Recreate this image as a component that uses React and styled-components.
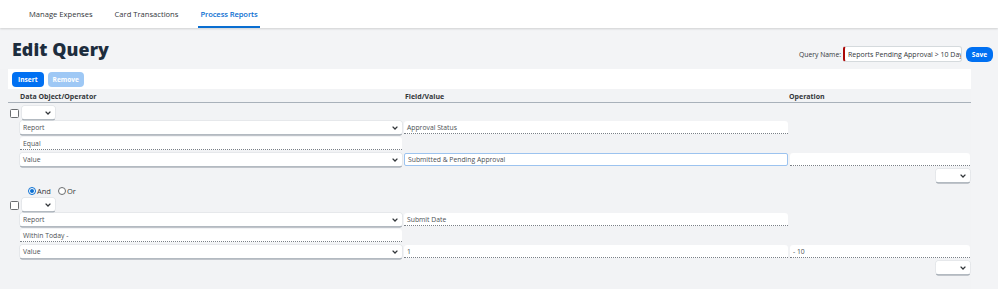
import React from 'react';
import styled, { createGlobalStyle } from 'styled-components';

const GlobalStyle = createGlobalStyle`
  html, body {
    margin: 0;
    padding: 0;
    background: #f5f6f7;
    font-family: "Open Sans", "Noto Sans", Arial, sans-serif;
    color: #32363a;
  }
`;

const Page = styled.div`
  width: 998px;
  height: 289px;
  overflow: hidden;
  background: #f3f4f6;
`;

const Nav = styled.nav`
  height: 28px;
  background: #ffffff;
  box-shadow: 0 1px 2px rgba(0, 0, 0, 0.15);
  display: flex;
  align-items: stretch;
  padding-left: 27px;
  gap: 18px;
  position: relative;
  z-index: 1;
`;

const Tab = styled.div`
  display: flex;
  align-items: center;
  padding: 1px 2px 0;
  font-size: 7.6px;
  font-weight: ${p => (p.$active ? 600 : 400)};
  letter-spacing: ${p => (p.$active ? '-0.1px' : '0')};
  color: ${p => (p.$active ? '#0a6ed1' : '#32363a')};
  border-bottom: 2px solid ${p => (p.$active ? '#0a6ed1' : 'transparent')};
`;

const TitleBar = styled.div`
  display: flex;
  justify-content: space-between;
  align-items: flex-start;
  height: 41px;
  padding: 0 5px 0 12px;
`;

const Title = styled.h1`
  margin: 9px 0 0;
  font-size: 17.8px;
  font-weight: 800;
  color: #1d2d3e;
  letter-spacing: 0.1px;
`;

const QueryName = styled.div`
  display: flex;
  align-items: center;
  gap: 2px;
  margin-top: 18px;
  font-size: 6.8px;
  color: #32363a;
`;

const NameInput = styled.div`
  width: 113px;
  height: 14px;
  background: #fff;
  border: 1px solid #d5dadd;
  border-left: 2px solid #aa0808;
  border-radius: 3px;
  display: flex;
  align-items: center;
  padding-left: 3px;
  overflow: hidden;
  white-space: nowrap;
  font-size: 7px;
`;

const Button = styled.div`
  height: 15px;
  padding: 0 ${p => p.$pad || 6}px;
  display: inline-flex;
  align-items: center;
  justify-content: center;
  border-radius: 4px;
  background: ${p => (p.$disabled ? '#9ec8f5' : '#0070f2')};
  color: #fff;
  font-size: 6.6px;
  font-weight: 700;
`;

const SaveButton = styled(Button)`
  margin-left: 2px;
  width: 27px;
  padding: 0;
  border-radius: 6px;
`;

const PanelBg = styled.div`
  width: 971px;
  background: #f2f3f5;
  height: 220px;
`;

const Panel = styled.div`
  width: 963px;
  margin-left: 8px;
`;

const Toolbar = styled.div`
  height: 20px;
  background: #fff;
  display: flex;
  align-items: center;
  gap: 4px;
  padding-left: 4px;
`;

const HeaderRow = styled.div`
  display: grid;
  grid-template-columns: 385px 384px 1fr;
  height: 13px;
  padding-left: 12px;
  padding-bottom: 1px;
  box-sizing: border-box;
  margin-top: 1px;
  border-bottom: 1.5px solid #a9b1ba;
  align-items: end;
  font-size: 7px;
  font-weight: 700;
  color: #32363a;
`;

const Block = styled.div`
  display: flex;
  flex-direction: column;
  gap: 3px;
  padding-top: 3px;
`;

const TopLine = styled.div`
  display: flex;
  align-items: center;
  gap: 3px;
  margin-left: 2px;
  margin-bottom: -1px;
`;

const Checkbox = styled.div`
  width: 7px;
  height: 7px;
  border: 1px solid #6a6d70;
  border-radius: 1.5px;
  background: #fff;
  margin-top: 2px;
`;

const Grid = styled.div`
  display: grid;
  grid-template-columns: 382px 384px 180px;
  column-gap: 2px;
  row-gap: 3px;
  margin-left: 12px;
`;

const Select = styled.div`
  height: 13px;
  width: ${p => (p.$w ? `${p.$w}px` : 'auto')};
  box-sizing: border-box;
  background: #fff;
  border-radius: 2px;
  box-shadow: 0 0 0 0.5px #d9dde1, 0 1.5px 0 #8d96a0;
  display: flex;
  align-items: center;
  justify-content: space-between;
  padding: 0 4px 0 3px;
  font-size: 6.8px;
  color: #4d5155;
  grid-column: ${p => p.$col || 'auto'};
  justify-self: ${p => p.$justify || 'stretch'};
`;

const Field = styled.div`
  height: 13px;
  box-sizing: border-box;
  background: #fff;
  border-radius: 3px 3px 0 0;
  border-bottom: 1px dotted #7a8087;
  display: flex;
  align-items: center;
  padding: 0 3px;
  font-size: 6.8px;
  color: #4d5155;
`;

const FocusField = styled(Field)`
  border: 1px solid #9cc3ef;
  border-radius: 2px;
`;

const RadioRow = styled.div`
  display: flex;
  align-items: center;
  margin: 4px 0 -1px 20px;
  font-size: 7.5px;
  color: #32363a;
  height: 10px;
`;

const Radio = styled.span`
  width: 6px;
  height: 6px;
  border-radius: 50%;
  border: 1px solid ${p => (p.$on ? '#0a6ed1' : '#6a6d70')};
  background: #fff;
  display: inline-flex;
  align-items: center;
  justify-content: center;
  margin-right: 1px;
  &::after {
    content: '';
    width: 4px;
    height: 4px;
    border-radius: 50%;
    background: ${p => (p.$on ? '#0a6ed1' : 'transparent')};
  }
`;

const RadioLabel = styled.span`
  margin-right: 7px;
`;

const Chevron = () => (
  <svg width="6" height="4" viewBox="0 0 6 4">
    <path d="M0.6 0.6 L3 3 L5.4 0.6" fill="none" stroke="#32363a" strokeWidth="1.3" />
  </svg>
);

const Criterion = ({ first, field, value, operation }) => (
  <Block>
    <TopLine>
      <Checkbox />
      <Select $w={33}>
        <span />
        <Chevron />
      </Select>
    </TopLine>
    <Grid>
      <Select>Report<Chevron /></Select>
      <Field>{field}</Field>
      <span />
      <Field>{first}</Field>
      <span />
      <span />
      <Select>Value<Chevron /></Select>
      {value.focused ? <FocusField>{value.text}</FocusField> : <Field>{value.text}</Field>}
      <Field>{operation}</Field>
      <Select $w={34} $col="3" $justify="end">
        <span />
        <Chevron />
      </Select>
    </Grid>
  </Block>
);

export default function App() {
  return (
    <Page>
      <GlobalStyle />
      <Nav>
        <Tab>Manage Expenses</Tab>
        <Tab>Card Transactions</Tab>
        <Tab $active>Process Reports</Tab>
      </Nav>
      <TitleBar>
        <Title>Edit Query</Title>
        <QueryName>
          Query Name:
          <NameInput>Reports Pending Approval &gt; 10 Days</NameInput>
          <SaveButton>Save</SaveButton>
        </QueryName>
      </TitleBar>
      <PanelBg>
        <Panel>
          <Toolbar>
            <Button>Insert</Button>
            <Button $disabled $pad={5}>Remove</Button>
          </Toolbar>
          <HeaderRow>
            <span>Data Object/Operator</span>
            <span>Field/Value</span>
            <span>Operation</span>
          </HeaderRow>
          <Criterion
            field="Approval Status"
            first="Equal"
            value={{ text: 'Submitted & Pending Approval', focused: true }}
            operation=""
          />
          <RadioRow>
            <Radio $on />
            <RadioLabel>And</RadioLabel>
            <Radio />
            <RadioLabel>Or</RadioLabel>
          </RadioRow>
          <Criterion
            field="Submit Date"
            first="Within Today -"
            value={{ text: '1' }}
            operation="- 10"
          />
        </Panel>
      </PanelBg>
    </Page>
  );
}
